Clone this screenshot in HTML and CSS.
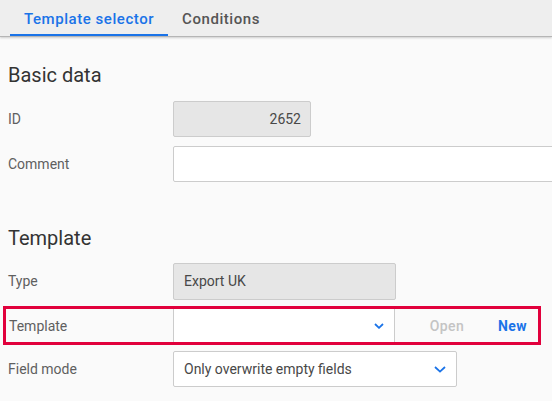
FILE: index.html
```html
<!DOCTYPE html>
<html>
<head>
<meta charset="utf-8">
<link rel="stylesheet" href="styles.css">
</head>
<body>
<div class="tabs">
  <div class="tab active">Template selector</div>
  <div class="tab">Conditions</div>
</div>
<div class="content">
  <h2 class="heading first">Basic data</h2>
  <div class="row">
    <label class="label">ID</label>
    <div class="field readonly id-field">2652</div>
  </div>
  <div class="row">
    <label class="label">Comment</label>
    <div class="field comment-field"></div>
  </div>

  <h2 class="heading second">Template</h2>
  <div class="row">
    <label class="label">Type</label>
    <div class="field readonly type-field">Export UK</div>
  </div>
  <div class="row highlight">
    <label class="label">Template</label>
    <div class="field select template-select">
      <span class="value"></span>
      <svg class="chev" width="10" height="6" viewBox="0 0 10 6"><path d="M1 1 L5 4.8 L9 1" fill="none" stroke="#1a73e8" stroke-width="1.8"/></svg>
    </div>
    <div class="actions">
      <span class="btn disabled">Open</span>
      <span class="btn primary">New</span>
    </div>
  </div>
  <div class="row">
    <label class="label">Field mode</label>
    <div class="field select mode-select">
      <span class="value">Only overwrite empty fields</span>
      <svg class="chev" width="12" height="7" viewBox="0 0 12 7"><path d="M1 1 L6 5.6 L11 1" fill="none" stroke="#1a73e8" stroke-width="1.8"/></svg>
    </div>
  </div>
</div>
</body>
</html>
```

FILE: styles.css
```css
* { box-sizing: border-box; }
html, body { margin: 0; padding: 0; }
body {
  width: 552px;
  height: 401px;
  overflow: hidden;
  background: #fafafa;
  font-family: Roboto, "Liberation Sans", Arial, sans-serif;
  color: #333;
}
.tabs {
  height: 37px;
  background: #eeeeee;
  border-bottom: 1px solid #b5b5b5;
  box-shadow: 0 1px 2px rgba(0,0,0,0.18);
  display: flex;
  padding-left: 10px;
  position: relative;
}
.tab {
  height: 36px;
  padding: 0 14px;
  display: flex;
  align-items: center;
  font-size: 15px;
  font-weight: 500;
  letter-spacing: 0.55px;
  color: #555;
  padding-top: 1px;
}
.tab.active {
  color: #1a73e8;
  border-bottom: 2px solid #1a73e8;
  padding-top: 3px;
}
.content {
  padding-left: 8px;
}
.heading {
  margin: 0;
  font-size: 20px;
  font-weight: 400;
  line-height: 24px;
  color: #333;
}
.heading.first { padding-top: 26px; margin-bottom: 14px; }
.heading.second { margin-top: 44px; margin-bottom: 13px; }
.row {
  display: flex;
  align-items: center;
  height: 36px;
  margin-bottom: 9px;
}
.label {
  width: 165px;
  flex: none;
  font-size: 14px;
  color: #5f5f5f;
}
.field {
  height: 36px;
  border: 1px solid #cccccc;
  border-radius: 2px;
  background: #fff;
  font-size: 14px;
  color: #484848;
  display: flex;
  align-items: center;
  padding: 0 9px;
  flex: none;
}
.readonly { background: #e6e6e6; }
.id-field { width: 138px; justify-content: flex-end; }
.comment-field { width: 400px; }
.type-field { width: 223px; padding-left: 10px; height: 37px; }
.select { justify-content: space-between; padding: 0 10px 0 10px; }
.mode-select { width: 284px; }
.row.highlight {
  margin-left: -5px;
  padding-left: 2px;
  width: 538px;
  height: 39px;
  border: 3px solid #e1003c;
  margin-top: -2px;
  margin-bottom: 6px;
}
.row.highlight .label { padding-left: 1px; }
.template-select {
  width: 222px;
  height: 33px;
  border-top: none;
  border-bottom: none;
  border-radius: 0;
}
.actions {
  flex: 1;
  display: flex;
  justify-content: flex-end;
  align-items: center;
  gap: 34px;
  padding-right: 11px;
}
.btn {
  font-size: 14px;
  font-weight: 500;
  letter-spacing: 0.4px;
}
.btn.disabled { color: #c4c4c4; }
.btn.primary { color: #1a73e8; font-weight: 700; }
.chev { display: block; }
```
